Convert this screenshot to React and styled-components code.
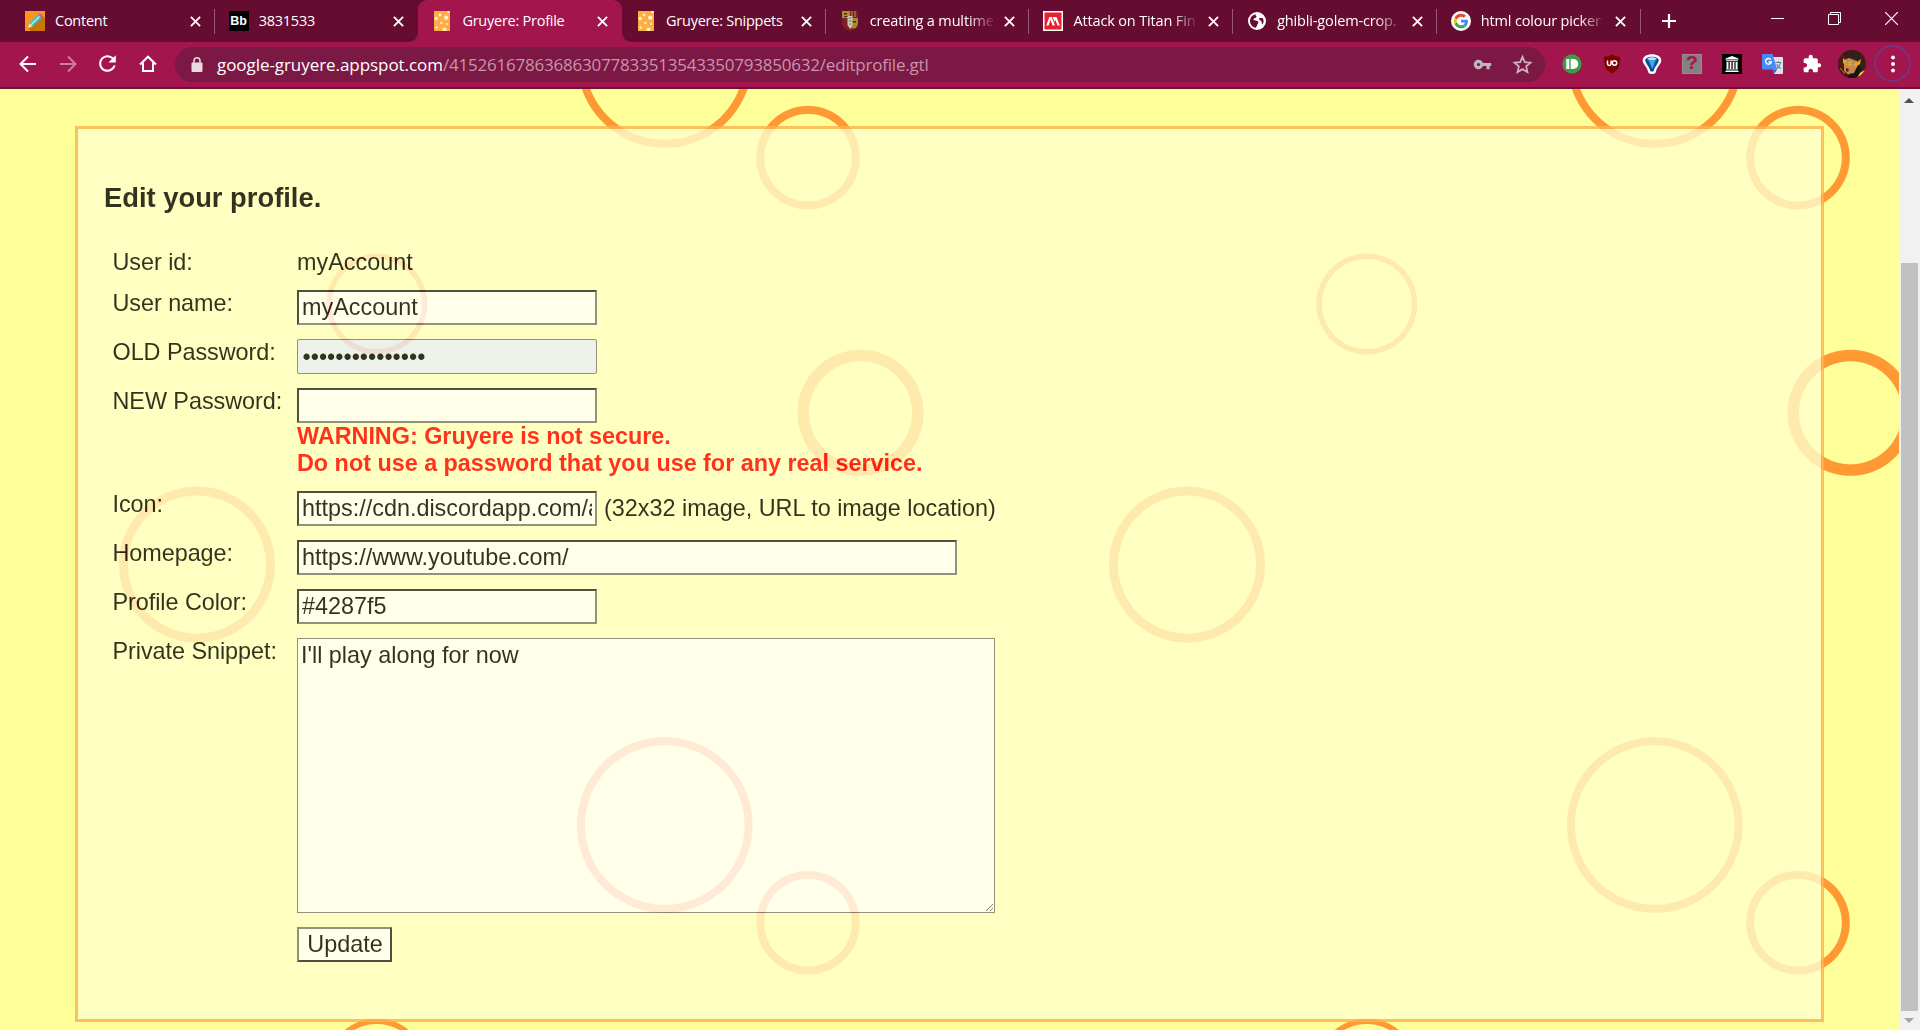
import React from 'react';
import styled, { createGlobalStyle, css } from 'styled-components';

const GlobalStyle = createGlobalStyle`
  *, *::before, *::after { box-sizing: border-box; }
  html, body { margin: 0; padding: 0; overflow: hidden; }
`;

const uiFont = '"Open Sans", "Noto Sans", sans-serif';
const pageFont = '"Liberation Sans", Arial, sans-serif';

/* ---------- browser chrome ---------- */

const Window = styled.div`
  display: flex;
  flex-direction: column;
  width: 1920px;
  height: 1030px;
  overflow: hidden;
  font-family: ${uiFont};
`;

const TabStrip = styled.div`
  display: flex;
  flex: none;
  height: 42px;
  padding-left: 11px;
  background: #660c31;
`;

const Tab = styled.div`
  position: relative;
  display: flex;
  align-items: center;
  flex: none;
  width: 203.7px;
  height: 42px;
  padding-left: 14px;
  color: #fff;
  ${(p) => p.$divider && css`
    &::after {
      content: '';
      position: absolute;
      right: 0;
      top: 9px;
      width: 1px;
      height: 25px;
      background: #95597a;
    }
  `}
  ${(p) => p.$active && css`
    background: #a2154d;
    border-radius: 9px 9px 0 0;
    &::before, &::after {
      content: '';
      position: absolute;
      bottom: 0;
      width: 9px;
      height: 9px;
    }
    &::before { left: -9px; background: radial-gradient(circle at 0 0, transparent 8.5px, #a2154d 9px); }
    &::after { right: -9px; background: radial-gradient(circle at 100% 0, transparent 8.5px, #a2154d 9px); }
  `}
`;

const Favicon = styled.span`
  display: flex;
  justify-content: center;
  flex: none;
  width: 20px;
  height: 20px;
  svg { display: block; }
`;

const TabTitle = styled.span`
  width: 126px;
  margin-left: 10px;
  white-space: nowrap;
  font-size: 14.5px;
  line-height: 22px;
  letter-spacing: ${(p) => (p.$fade ? -0.15 : -0.25)}px;
  ${(p) => p.$fade && css`
    mask-image: linear-gradient(to right, #000 78%, transparent 100%);
  `}
`;

const TabClose = styled.span`
  display: flex;
  margin-left: 8.5px;
  svg { display: block; }
`;

const NewTab = styled.span`
  display: flex;
  align-items: center;
  justify-content: center;
  width: 56px;
`;

const WindowControls = styled.div`
  display: flex;
  align-items: center;
  height: 36px;
  margin-left: auto;
`;

const WindowButton = styled.span`
  display: flex;
  justify-content: center;
  width: 57px;
`;

const Toolbar = styled.div`
  display: flex;
  align-items: center;
  flex: none;
  height: 47px;
  padding: 0 8.5px 2px 7.5px;
  background: #a2154d;
  border-bottom: 2px solid #720e38;
`;

const ToolButton = styled.span`
  display: flex;
  align-items: center;
  justify-content: center;
  flex: none;
  width: 40px;
  height: 36px;
  opacity: ${(p) => (p.$dim ? 0.45 : 1)};
  svg { display: block; }
`;

const Omnibox = styled.div`
  display: flex;
  align-items: center;
  width: 1370px;
  height: 35px;
  margin: 2px 7px 0 7.5px;
  padding: 0 3px 0 16px;
  border-radius: 18px;
  background: #7b1843;
`;

const Url = styled.span`
  flex: 1;
  margin-left: 14px;
  color: #c894ab;
  white-space: nowrap;
  font-size: 17px;
  letter-spacing: -0.21px;
  line-height: 26px;
`;

const UrlHost = styled.span`
  color: #fff;
  letter-spacing: -0.06px;
`;

const MenuRing = styled.span`
  display: flex;
  align-items: center;
  justify-content: center;
  width: 37px;
  height: 37px;
  margin-left: 2px;
  border: 2px solid #773281;
  border-radius: 50%;
`;

/* ---------- page ---------- */

const RINGS = [
  { x: 664.7, y: 60, r: 87.8, w: 8 },
  { x: 808, y: 157.7, r: 51.8, w: 8 },
  { x: 860.5, y: 412.8, r: 63, w: 11.5 },
  { x: 376.8, y: 304, r: 50.5, w: 5.5 },
  { x: 197, y: 564.6, r: 78, w: 9 },
];
const TILE_W = 990;
const TILE_H = 765;
const PAGE_TOP = 89;

const ringLayer = ({ x, y, r, w }, dy) =>
  `radial-gradient(circle at ${x}px ${y - PAGE_TOP + dy}px, transparent ${r - w - 0.5}px, #ff9933 ${r - w + 0.5}px, #ff9933 ${r - 0.5}px, transparent ${r + 0.5}px)`;

const cheese = RINGS.flatMap((ring) =>
  ring.y - PAGE_TOP - ring.r < 0 ? [ringLayer(ring, 0), ringLayer(ring, TILE_H)] : [ringLayer(ring, 0)]
).join(', ');

const Viewport = styled.div`
  display: flex;
  flex: none;
  height: 941px;
`;

const Page = styled.div`
  width: 1899px;
  height: 941px;
  padding: 37px 75px 8px;
  background: ${cheese};
  background-size: ${TILE_W}px ${TILE_H}px;
  background-color: #ffff99;
`;

const Panel = styled.main`
  width: 1749px;
  height: 896px;
  padding: 51px 27px 0 26px;
  border: 3px solid #ffb14d;
  background: #ffffcc;
  opacity: 0.8;
  color: #000;
  font: 23.4px/27px ${pageFont};
`;

const Heading = styled.h2`
  margin: 0;
  font-size: 27.35px;
  line-height: 36px;
`;

const Form = styled.form`
  display: grid;
  grid-template-columns: 184.5px max-content;
  row-gap: 14px;
  margin: 33px 0 0 8.5px;
`;

const Label = styled.label`
  letter-spacing: -0.05px;
`;

const Value = styled.div`
  height: 27px;
`;

const Field = styled.div`
  display: flex;
  flex-direction: column;
  align-items: flex-start;
`;

const Inline = styled.div`
  display: flex;
  align-items: center;
  gap: 7px;
  white-space: nowrap;
`;

const Input = styled.input`
  display: block;
  width: ${(p) => p.$width || 300}px;
  height: 35px;
  margin: 0;
  padding: 0 3px;
  border: 2px solid;
  border-color: #252525 #767676 #767676 #252525;
  border-radius: 0;
  outline: none;
  background: #fff;
  color: #000;
  font: 23.4px/28px ${pageFont};
  ${(p) => p.$autofilled && css`
    padding: 1px 4.5px 0;
    border: 1px solid #767676;
    border-radius: 2px;
    background: #e8f0fe;
  `}
`;

const Warning = styled.div`
  color: #f00;
  font-weight: bold;
  letter-spacing: -0.02px;
  white-space: nowrap;
`;

const Snippet = styled.textarea`
  display: block;
  width: 698px;
  height: 275px;
  margin: 0;
  padding: 3px;
  border: 1px solid #767676;
  outline: none;
  background: #fff;
  color: #000;
  font: 23.4px/27px ${pageFont};
`;

const Submit = styled.button`
  width: 95px;
  height: 35px;
  padding: 0 0 2px 1px;
  border: 2px solid;
  border-color: #767676 #252525 #252525 #767676;
  background: #fff;
  color: #000;
  font: 23.4px/28px ${pageFont};
`;

const Scrollbar = styled.div`
  display: flex;
  flex-direction: column;
  align-items: center;
  width: 21px;
  height: 941px;
  padding-right: 1px;
  background: #f1f1f1;
`;

const ScrollArrow = styled.span`
  width: 0;
  height: 0;
  margin-top: ${(p) => (p.$down ? 7 : 9)}px;
  border: 5px solid transparent;
  border-width: ${(p) => (p.$down ? '5px 5px 0' : '0 5px 5px')};
  border-color: ${(p) => (p.$down ? '#a3a3a3 transparent' : 'transparent transparent #505050')};
`;

const ScrollThumb = styled.span`
  width: 17px;
  height: 748px;
  margin-top: 160px;
  background: #c1c1c1;
`;

/* ---------- icons ---------- */

const CloseIcon = () => (
  <svg width="11" height="11" viewBox="0 0 12 12" stroke="#fff" strokeWidth="2">
    <path d="M1 1l10 10M11 1L1 11" />
  </svg>
);

const PencilIcon = () => (
  <svg width="20" height="20" viewBox="0 0 20 20">
    <rect width="20" height="20" fill="#f8961d" />
    <path d="M3 17L17 4l3 3v13H6z" fill="#c87606" />
    <path d="M3 17l1.3-4.600 3.400 3.200z" fill="#f7e3b8" />
    <path d="M4.300 12.400L13 3.800l3.300 3.200-8.600 8.600z" fill="#35c5cb" />
    <path d="M5.800 14L14.600 5.300" stroke="#b8f2ee" strokeWidth="1.200" />
    <path d="M13 3.800l1.200-1.100c1.600-.9 3.900 1.400 3.100 3.100l-1 1.200z" fill="#b06bc4" />
  </svg>
);

const BbText = styled.span`
  display: flex;
  align-items: center;
  justify-content: center;
  width: 20px;
  height: 20px;
  background: #000;
  color: #fff;
  font: bold 12.5px/20px ${pageFont};
`;

const CheeseIcon = () => (
  <svg width="16" height="20" viewBox="0 0 16 20">
    <rect width="16" height="20" fill="#ffac40" />
    <g fill="#fff3d6">
      <circle cx="6" cy="4" r="1.400" />
      <circle cx="12.200" cy="6.600" r="2.200" />
      <circle cx="2.200" cy="7.600" r="1.800" />
      <circle cx="7.400" cy="12" r="1.300" />
      <circle cx="13" cy="13" r="1" />
      <circle cx="2.600" cy="16.500" r="1.200" />
      <circle cx="10.500" cy="18.400" r="2" />
      <circle cx="14.500" cy="1" r="1.300" />
    </g>
  </svg>
);

const CrestIcon = () => (
  <svg width="16" height="20" viewBox="0 0 16 20">
    <path d="M0 0h16v12c0 4-4 7-8 8-4-1-8-4-8-8z" fill="#7d2027" />
    <path d="M0 0h8v7H0z" fill="#b08f2b" />
    <path d="M8 7h8v5c0 2-1 4-3 5.500L8 17z" fill="#a8892e" />
    <path d="M2 2h3v1.500H2zM2 5h4v1H2zM11 2h3v3h-3zM10 10h4v1.500h-4z" fill="#4b2f20" />
    <path d="M10 0v6M13 0v6" stroke="#c29c34" />
    <path d="M5.500 5h5v9L8 18l-2.500-4z" fill="#cfc9b8" />
    <path d="M6.500 7h3M6.500 10h3M7 13h2" stroke="#777062" />
  </svg>
);

const TitanIcon = () => (
  <svg width="20" height="20" viewBox="0 0 20 20">
    <rect width="20" height="20" fill="#fff" />
    <rect x="1.500" y="1.500" width="17" height="17" fill="#ea1f2f" />
    <path d="M3.300 14.500L6.300 6h2.400l3.300 8.500H9.600L7.500 9l-1.900 5.500zM9.600 6H13.500l3.300 8.500h-2.300L12.400 9l-.7 1.900z" fill="#fff" />
  </svg>
);

const GlobeIcon = () => (
  <svg width="18" height="20" viewBox="0 -1 18 20">
    <circle cx="9" cy="9" r="9" fill="#fff" />
    <path d="M8.800 2.200c-2 .3-1 1.800-.2 2.300-.2 1.800-2.800 1.300-3.300 3.200 1.200 1.300 3.400.3 4.600 1.600 1.400 1.300-.4 2.300-.7 3.600-.2 1.200-1 1.900-1.600 2.800-3.300-.6-5.700-3.500-5.600-7C2.200 5 5 2.200 8.800 2.200zM11.500 5.800c1.500.7 2.800-.3 3.500.6.9 1.800.8 4.300-.5 6-1.300-.8-.4-2.300-1.300-3.300-.9-.7-2.900-1.500-1.700-3.300z" fill="#660c31" />
  </svg>
);

const GoogleIcon = () => (
  <svg width="20" height="20" viewBox="0 0 20 20">
    <circle cx="10" cy="10" r="10" fill="#fff" />
    <g transform="translate(2.800 2.800) scale(.3)">
      <path fill="#EA4335" d="M24 9.500c3.540 0 6.710 1.220 9.210 3.600l6.850-6.850C35.900 2.380 30.470 0 24 0 14.620 0 6.510 5.380 2.560 13.220l7.980 6.190C12.430 13.720 17.740 9.500 24 9.500z" />
      <path fill="#4285F4" d="M46.980 24.550c0-1.570-.15-3.090-.38-4.550H24v9.020h12.940c-.58 2.960-2.260 5.480-4.780 7.180l7.730 6c4.510-4.180 7.090-10.360 7.090-17.650z" />
      <path fill="#FBBC05" d="M10.530 28.590A14.500 14.500 0 0 1 9.770 24c0-1.600.27-3.140.76-4.590l-7.980-6.190A23.900 23.900 0 0 0 0 24c0 3.880.92 7.540 2.560 10.780l7.970-6.190z" />
      <path fill="#34A853" d="M24 48c6.480 0 11.930-2.130 15.890-5.810l-7.730-6c-2.150 1.450-4.920 2.300-8.160 2.300-6.260 0-11.570-4.220-13.470-9.910l-7.980 6.190C6.510 42.620 14.620 48 24 48z" />
    </g>
  </svg>
);

const BackIcon = () => (
  <svg width="18" height="18" viewBox="0 0 18 18" fill="none" stroke="#fff" strokeWidth="2">
    <path d="M17 9H2M9 1.500L1.500 9 9 16.500" />
  </svg>
);
const ForwardIcon = () => (
  <svg width="18" height="18" viewBox="0 0 18 18" fill="none" stroke="#fff" strokeWidth="2">
    <path d="M1 9h15M9 1.500L16.500 9 9 16.500" />
  </svg>
);
const ReloadIcon = () => (
  <svg width="25" height="25" viewBox="0 0 24 24" fill="#fff">
    <path d="M17.650 6.350C16.200 4.900 14.210 4 12 4c-4.420 0-7.990 3.580-7.990 8s3.570 8 7.990 8c3.730 0 6.840-2.550 7.730-6h-2.080c-.82 2.330-3.040 4-5.650 4-3.310 0-6-2.690-6-6s2.690-6 6-6c1.660 0 3.140.69 4.220 1.780L13 11h7V4l-2.350 2.350z" />
  </svg>
);
const HomeIcon = () => (
  <svg width="18" height="18" viewBox="0 0 18 18" fill="none" stroke="#fff" strokeWidth="2">
    <path d="M1 9.500L9 1.700l8 7.800M4 7.500V16h10V7.500" />
  </svg>
);
const LockIcon = () => (
  <svg width="12" height="16" viewBox="0 0 12 16">
    <rect x="0.500" y="5.500" width="11" height="9.500" rx="1" fill="#ead9e0" />
    <path d="M3 6V3.800a3 3 0 0 1 6 0V6" fill="none" stroke="#ead9e0" strokeWidth="1.500" />
  </svg>
);
const KeyIcon = () => (
  <svg width="19" height="19" viewBox="0 0 24 24" fill="#c3b3bd">
    <path d="M12.650 10C11.830 7.670 9.610 6 7 6c-3.310 0-6 2.690-6 6s2.690 6 6 6c2.610 0 4.830-1.670 5.650-4H17v4h4v-4h2v-4H12.650zM7 14c-1.100 0-2-.9-2-2s.9-2 2-2 2 .9 2 2-.9 2-2 2z" />
  </svg>
);
const StarIcon = () => (
  <svg width="21" height="21" viewBox="0 0 24 24" fill="none" stroke="#c9b5c0" strokeWidth="2">
    <path d="M12 3.200l2.600 6.100 6.600.6-5 4.300 1.500 6.500L12 17.300l-5.700 3.400 1.500-6.500-5-4.300 6.600-.6z" />
  </svg>
);
const PushIcon = () => (
  <svg width="20" height="20" viewBox="0 0 20 20">
    <circle cx="10" cy="10" r="9.700" fill="#3c9b47" />
    <rect x="4.300" y="5" width="3" height="10" rx=".6" fill="#fff" />
    <path d="M8.700 5h2.600a5 5 0 0 1 0 10H8.700z" fill="#fff" />
  </svg>
);
const ShieldIcon = () => (
  <svg width="18" height="20" viewBox="0 0 18 20">
    <path d="M9 0c2.500 1.700 5.200 2.300 8.500 2.300 0 8-.5 13.700-8.500 17.700C1 16 .5 10.300.5 2.300 3.800 2.300 6.500 1.700 9 0z" fill="#7f0000" stroke="#9c3040" strokeWidth=".6" />
    <path d="M4.500 6.500v3.300c0 2.200 3.500 2.200 3.500 0V6.500" fill="none" stroke="#fff" strokeWidth="1.500" />
    <circle cx="11.500" cy="9" r="2.200" fill="none" stroke="#fff" strokeWidth="1.500" />
  </svg>
);
const BalloonIcon = () => (
  <svg width="20" height="20" viewBox="0 0 20 20">
    <path d="M10 .3c5 0 9.300 2.200 9.300 6.200 0 3.700-4.300 6-5.300 11C13.500 19.300 12.500 20 10 20s-3.500-.7-4-2.500c-1-5-5.300-7.300-5.300-11C.7 2.500 5 .3 10 .3z" fill="#fff" />
    <path d="M10 2.800c4 0 6.700 1.300 6.700 3.700 0 2.700-3.700 5.500-5.200 11h-3C7 12 3.300 9.200 3.300 6.500c0-2.400 2.700-3.700 6.700-3.700z" fill="#0d4f94" />
    <path d="M6 5c.8-1.600 2.200-2 4-2s3.200.4 4 2L10.500 15z" fill="#3fa6ee" />
    <path d="M5 5c2-2 8-2 10 0-3 1.200-7 1.200-10 0z" fill="#c3e6fb" />
  </svg>
);
const QuestionBox = styled.span`
  width: 20px;
  height: 20px;
  background: #828282;
  border: 1px solid #9b8a90;
  color: #a2154d;
  text-align: center;
  font: bold 20px/18px "Liberation Mono", monospace;
`;
const ArchiveIcon = () => (
  <svg width="20" height="20" viewBox="0 0 20 20">
    <rect width="20" height="20" fill="#000" />
    <path d="M10 2l6.500 2.500v1h-13v-1zM4 6.300h12v1H4zM4.500 8h2v7h-2zM7.700 8h1.700v7H7.700zM10.700 8h1.700v7h-1.700zM13.600 8h2v7h-2zM4 15.500h12v.9H4zM3.300 17h13.400v1H3.300z" fill="#fff" />
  </svg>
);
const TranslateIcon = () => (
  <svg width="21" height="20" viewBox="0 0 21 20">
    <path d="M8 3h12a1 1 0 0 1 1 1v15a1 1 0 0 1-1 1h-8z" fill="#dfe3ea" />
    <path d="M1 0h9.500L15.200 15.500H1a1 1 0 0 1-1-1V1a1 1 0 0 1 1-1z" fill="#4a8af4" />
    <path d="M10.800 15.500h4.400L12 20z" fill="#3263c4" />
    <path d="M8.800 5.600A2.900 2.900 0 1 0 9.300 8H6.600" fill="none" stroke="#fff" strokeWidth="1.400" />
    <path d="M13.500 8.500h6M16.500 7v1.500M18.500 8.500c-.5 3-2.200 5-4 6.200M14.800 10c.7 2 2.200 3.700 4 4.500" fill="none" stroke="#6b7d91" strokeWidth="1.100" />
  </svg>
);
const PuzzleIcon = () => (
  <svg width="20" height="20" viewBox="0 0 24 24" fill="#fff">
    <path d="M20.500 11H19V7c0-1.100-.9-2-2-2h-4V3.500C13 2.120 11.880 1 10.500 1S8 2.120 8 3.500V5H4c-1.100 0-1.990.9-1.990 2v3.800H3.500c1.490 0 2.700 1.210 2.700 2.700s-1.210 2.700-2.700 2.700H2V20c0 1.100.9 2 2 2h3.800v-1.500c0-1.490 1.210-2.700 2.700-2.700 1.490 0 2.700 1.210 2.700 2.700V22H17c1.100 0 2-.9 2-2v-4h1.500c1.380 0 2.500-1.120 2.500-2.500S21.880 11 20.500 11z" />
  </svg>
);
const AvatarIcon = () => (
  <svg width="28" height="28" viewBox="0 0 28 28">
    <defs><clipPath id="avatar"><circle cx="14" cy="14" r="14" /></clipPath></defs>
    <g clipPath="url(#avatar)">
      <rect width="28" height="28" fill="#4a1c12" />
      <path d="M5 4C9-1 20-1 25 6l2 8-2 7-7 2-8-14z" fill="#33201b" />
      <path d="M6 10l5-2 8 3 1 7-3 6-6 1-5-4z" fill="#c58558" />
      <path d="M5 8l4 4 4-1 3 2 3-1 4-3-1 5-4 3-3-2-3 1-4-1-3-2z" fill="#e9a41f" />
      <path d="M7.500 12l3 1-1 2zM13 12.500l4 .5-3 2z" fill="#3e9fe6" />
      <path d="M8 18l3 1-1 3-2-1z" fill="#5e1712" />
      <path d="M9 28l2-4 5-1 4-8 3 3-3 10z" fill="#1b1413" />
      <path d="M19 28l3-5 6-4v5l-5 4z" fill="#ffd31f" />
      <path d="M0 15l5 5 5 8H0z" fill="#491710" />
      <path d="M2 18l5 6" stroke="#d08a1e" />
    </g>
  </svg>
);
const MenuIcon = () => (
  <svg width="6" height="18" viewBox="0 0 6 18" fill="#fff">
    <circle cx="3" cy="2.600" r="2" /><circle cx="3" cy="9" r="2" /><circle cx="3" cy="15.400" r="2" />
  </svg>
);

const TABS = [
  { icon: <PencilIcon />, title: 'Content', divider: true },
  { icon: <BbText>Bb</BbText>, title: '3831533' },
  { icon: <CheeseIcon />, title: 'Gruyere: Profile', active: true },
  { icon: <CheeseIcon />, title: 'Gruyere: Snippets', divider: true },
  { icon: <CrestIcon />, title: 'creating a multime', divider: true, fade: true },
  { icon: <TitanIcon />, title: 'Attack on Titan Fin', divider: true, fade: true },
  { icon: <GlobeIcon />, title: 'ghibli-golem-crop.', divider: true, fade: true },
  { icon: <GoogleIcon />, title: 'html colour picker', divider: true, fade: true },
];

const EXTENSIONS = [
  <PushIcon />, <ShieldIcon />, <BalloonIcon />, <QuestionBox>?</QuestionBox>,
  <ArchiveIcon />, <TranslateIcon />, <PuzzleIcon />, <AvatarIcon />,
];

export default function App() {
  return (
    <Window>
      <GlobalStyle />
      <TabStrip>
        {TABS.map((tab) => (
          <Tab key={tab.title} $active={tab.active} $divider={tab.divider}>
            <Favicon>{tab.icon}</Favicon>
            <TabTitle $fade={tab.fade}>{tab.title}</TabTitle>
            <TabClose><CloseIcon /></TabClose>
          </Tab>
        ))}
        <NewTab>
          <svg width="14" height="14" viewBox="0 0 14 14" stroke="#fff" strokeWidth="2.200"><path d="M7 0v14M0 7h14" /></svg>
        </NewTab>
        <WindowControls>
          <WindowButton><svg width="13" height="13" viewBox="0 0 13 13" stroke="#fff"><path d="M0 6.500h13" /></svg></WindowButton>
          <WindowButton>
            <svg width="13" height="13" viewBox="0 0 13 13" stroke="#fff" fill="none"><path d="M.5 2.500h10v10H.500zM2.500 2.500v-2h10v10h-2" /></svg>
          </WindowButton>
          <WindowButton><svg width="13" height="13" viewBox="0 0 13 13" stroke="#fff" strokeWidth="1.200"><path d="M0 0l13 13M13 0L0 13" /></svg></WindowButton>
        </WindowControls>
      </TabStrip>

      <Toolbar>
        <ToolButton><BackIcon /></ToolButton>
        <ToolButton $dim><ForwardIcon /></ToolButton>
        <ToolButton><ReloadIcon /></ToolButton>
        <ToolButton><HomeIcon /></ToolButton>
        <Omnibox>
          <LockIcon />
          <Url><UrlHost>google-gruyere.appspot.com</UrlHost>/415261678636863077833513543350793850632/editprofile.gtl</Url>
          <ToolButton><KeyIcon /></ToolButton>
          <ToolButton><StarIcon /></ToolButton>
        </Omnibox>
        {EXTENSIONS.map((icon, i) => <ToolButton key={i}>{icon}</ToolButton>)}
        <MenuRing><MenuIcon /></MenuRing>
      </Toolbar>

      <Viewport>
        <Page>
          <Panel>
            <Heading>Edit your profile.</Heading>
            <Form>
              <Label>User id:</Label>
              <Value>myAccount</Value>

              <Label>User name:</Label>
              <Input defaultValue="myAccount" />

              <Label>OLD Password:</Label>
              <Input type="password" defaultValue="123456789012345" $autofilled />

              <Label>NEW Password:</Label>
              <Field>
                <Input type="password" />
                <Warning>WARNING: Gruyere is not secure.<br />Do not use a password that you use for any real service.</Warning>
              </Field>

              <Label>Icon:</Label>
              <Inline>
                <Input defaultValue="https://cdn.discordapp.com/attachments/" />
                <span>(32x32 image, URL to image location)</span>
              </Inline>

              <Label>Homepage:</Label>
              <Input defaultValue="https://www.youtube.com/" $width={660} />

              <Label>Profile Color:</Label>
              <Input defaultValue="#4287f5" />

              <Label>Private Snippet:</Label>
              <Snippet defaultValue="I'll play along for now" />

              <span />
              <Submit type="button">Update</Submit>
            </Form>
          </Panel>
        </Page>
        <Scrollbar>
          <ScrollArrow />
          <ScrollThumb />
          <ScrollArrow $down />
        </Scrollbar>
      </Viewport>
    </Window>
  );
}
